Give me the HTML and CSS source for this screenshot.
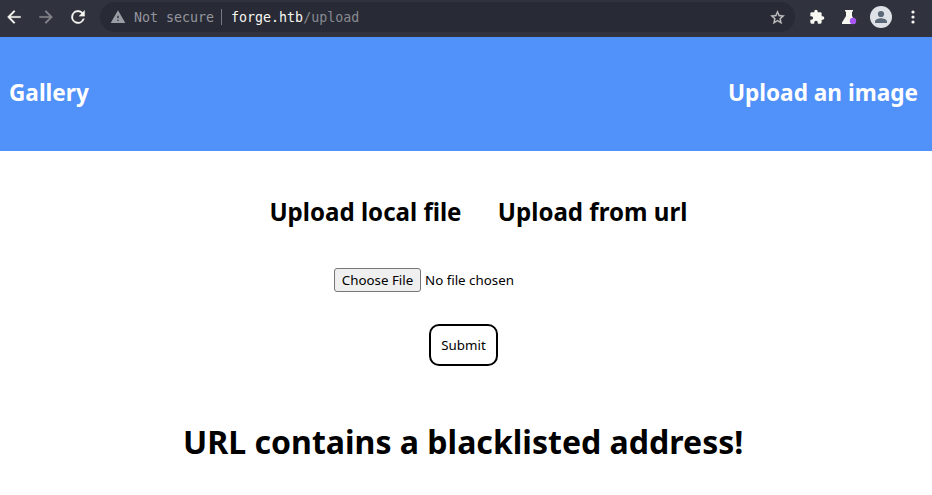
FILE: index.html
```html
<!DOCTYPE html>
<html lang="en">
<head>
<meta charset="utf-8">
<title>Upload an image</title>
<link rel="stylesheet" href="styles.css">
</head>
<body>
<div class="toolbar">
  <svg class="nav-icon" viewBox="0 0 24 24"><path fill="#f8f8f2" stroke="#f8f8f2" stroke-width=".25" d="M20 11H7.83l5.59-5.59L12 4l-8 8 8 8 1.41-1.41L7.83 13H20z"/></svg>
  <svg class="nav-icon" viewBox="0 0 24 24"><path fill="#85868b" stroke="#85868b" stroke-width=".25" d="M4 13h12.17l-5.59 5.59L12 20l8-8-8-8-1.41 1.41L16.17 11H4z"/></svg>
  <svg class="nav-icon" viewBox="0 0 24 24"><path fill="#f8f8f2" stroke="#f8f8f2" stroke-width=".3" d="M17.65 6.35A8 8 0 1 0 19.73 14h-2.08A6 6 0 1 1 12 6c1.66 0 3.14.69 4.22 1.78L13 11h7V4z"/></svg>
  <div class="address">
    <svg class="warning" viewBox="0 0 24 24"><path fill="#9a9ca4" d="M1 21h22L12 2zm12-3h-2v-2h2zm0-4h-2v-4h2z"/></svg>
    <span class="security">Not secure</span>
    <span class="divider"></span>
    <span class="url">forge.htb<span class="path">/upload</span></span>
    <svg class="star" viewBox="0 0 24 24"><path fill="#c2c3c3" stroke="#c2c3c3" stroke-width=".4" d="m22 9.24-7.19-.62L12 2 9.19 8.63 2 9.24l5.46 4.73L5.82 21 12 17.27 18.18 21l-1.63-7.03zM12 15.4l-3.76 2.27 1-4.28-3.32-2.88 4.38-.38L12 6.1l1.71 4.04 4.38.38-3.32 2.88 1 4.28z"/></svg>
  </div>
  <svg class="puzzle" viewBox="0 0 24 24"><path fill="#f8f8f2" d="M20.5 11H19V7a2 2 0 0 0-2-2h-4V3.500a2.500 2.500 0 0 0-5 0V5H4a2 2 0 0 0-2 2v3.800h1.500a2.700 2.700 0 0 1 0 5.400H2V20a2 2 0 0 0 2 2h3.800v-1.500a2.700 2.700 0 0 1 5.400 0V22H17a2 2 0 0 0 2-2v-4h1.500a2.500 2.500 0 0 0 0-5z"/></svg>
  <svg class="flask" viewBox="0 0 18 18"><path fill="#f8f8f2" d="M5 2h8v1.500h-1V8l3 5v3H2v-1.500L6 8V3.500H5z"/><circle cx="13" cy="13" r="3.200" fill="#a855f7"/></svg>
  <svg class="avatar" viewBox="0 0 22 22"><circle cx="11" cy="11" r="11" fill="#dee1e6"/><circle cx="11" cy="8" r="3.100" fill="#5b6878"/><path fill="#5b6878" d="M5 17v-1.500c0-2.300 4-3.200 6-3.200s6 .9 6 3.200V17z"/></svg>
  <svg class="menu" viewBox="0 0 4 14"><g fill="#f8f8f2"><circle cx="2" cy="2" r="1.600"/><circle cx="2" cy="7" r="1.600"/><circle cx="2" cy="12" r="1.600"/></g></svg>
</div>
<header class="site-header"><h2>Gallery</h2><h2>Upload an image</h2></header>
<main>
  <div class="tabs"><h2>Upload local file</h2><h2>Upload from url</h2></div>
  <form class="upload">
    <div class="file-row"><button type="button" class="choose">Choose File</button><span>No file chosen</span></div>
    <button type="button" class="submit">Submit</button>
  </form>
  <h1>URL contains a blacklisted address!</h1>
</main>
</body>
</html>
```
FILE: styles.css
```css
* { box-sizing: border-box; }
body { margin: 0; height: 495px; overflow: hidden; background: #fff; color: #000; font-family: "Noto Sans", sans-serif; }
svg { display: block; flex: none; }
h1, h2 { margin: 0; white-space: nowrap; }
.toolbar { display: flex; align-items: center; height: 37px; padding: 0 0 3px 4px; background: #30323e; }
.nav-icon { width: 20px; height: 20px; margin-right: 12px; }
.address { display: flex; align-items: center; width: 695px; height: 30px; padding: 0 10px; border-radius: 15px; background: #282a36; font: 13.3px "DejaVu Sans Mono", monospace; }
.warning { width: 16px; height: 16px; }
.security { margin-left: 8px; color: #94969d; }
.divider { width: 1px; height: 16px; margin: 0 9px 0 7px; background: #777982; }
.url { color: #f8f8f2; }
.path { color: #888a91; }
.star { width: 17px; height: 17px; margin: 0 -1px 0 auto; }
.puzzle { width: 16px; height: 16px; margin-left: 14px; }
.flask { width: 18px; height: 18px; margin-left: 15px; }
.avatar { width: 22px; height: 22px; margin-left: 12px; }
.menu { width: 4px; height: 14px; margin-left: 19px; }
.site-header { display: flex; justify-content: space-between; align-items: center; height: 114px; padding: 0 14px 2px 9px; background: #5191fa; color: #fff; }
.site-header h2 { font-size: 22.6px; line-height: 32px; }
.tabs { display: flex; gap: 36.3px; padding: 44px 0 0 269.4px; }
.tabs h2 { font-size: 24.08px; line-height: 33px; }
.upload { display: flex; flex-direction: column; align-items: flex-start; padding-top: 40px; font-size: 13.333px; }
.file-row { display: flex; align-items: center; gap: 4px; margin-left: 334px; }
button { font: inherit; color: #000; padding: 0; }
.choose { width: 87px; height: 24px; border: 1px solid #767676; border-radius: 3px; background: #efefef; }
.submit { width: 69px; height: 42px; margin: 32px 0 0 429px; border: 2px solid #000; border-radius: 10px; background: #fff; }
h1 { padding: 54px 0 0 183px; font-size: 32.06px; line-height: 44px; }
```
